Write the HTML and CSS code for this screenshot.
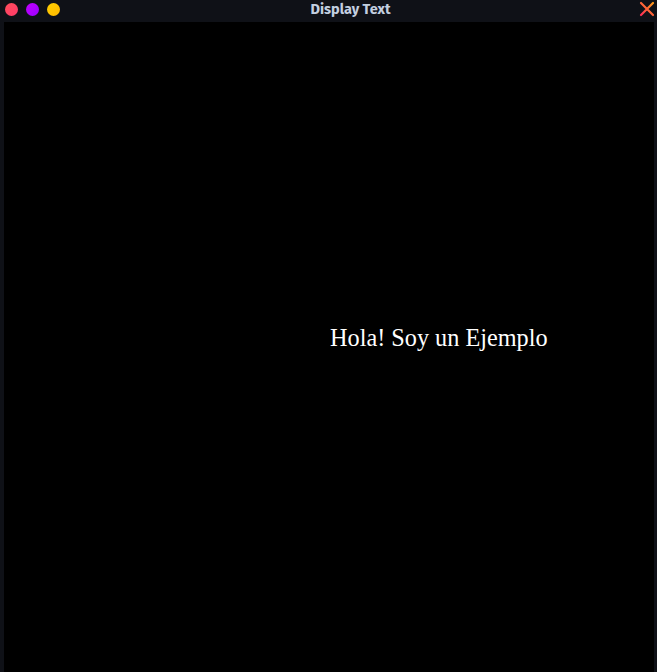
FILE: index.html
```html
<!DOCTYPE html>
<html>
<head>
<meta charset="utf-8">
<link rel="stylesheet" href="styles.css">
<title>Display Text</title>
</head>
<body>
<div class="window">
  <div class="titlebar">
    <div class="dots">
      <span class="dot red"></span>
      <span class="dot purple"></span>
      <span class="dot yellow"></span>
    </div>
    <div class="title">Display Text</div>
    <div class="close">
      <svg width="16" height="16" viewBox="0 0 16 16">
        <defs>
          <linearGradient id="g" x1="0" y1="1" x2="1" y2="0">
            <stop offset="0" stop-color="#ff2d55"/>
            <stop offset="1" stop-color="#ff9a1a"/>
          </linearGradient>
        </defs>
        <path d="M2 2 L14 14 M14 2 L2 14" stroke="url(#g)" stroke-width="2.2" stroke-linecap="round"/>
      </svg>
    </div>
  </div>
  <div class="content">
    <div class="canvas">
      <p class="msg">Hola! Soy un Ejemplo</p>
    </div>
  </div>
</div>
</body>
</html>
```

FILE: styles.css
```css
html, body {
  margin: 0;
  padding: 0;
  background: #0f1117;
}
.window {
  width: 657px;
  height: 672px;
  display: flex;
  flex-direction: column;
  background: #0f1117;
}
.titlebar {
  height: 22px;
  display: flex;
  align-items: center;
  position: relative;
}
.dots {
  display: flex;
  gap: 8px;
  padding-left: 5px;
  padding-top: 0;
  margin-top: -4px;
}
.dot {
  width: 13px;
  height: 13px;
  border-radius: 50%;
  display: block;
}
.red { background: linear-gradient(135deg, #ff4d5a, #ff3a6a); }
.purple { background: linear-gradient(135deg, #c400ff, #9b00ff); }
.yellow { background: linear-gradient(135deg, #ffd000, #ffb800); }
.title {
  flex: 1;
  text-align: center;
  font-family: "Fira Sans", "Open Sans", "Noto Sans", sans-serif;
  font-weight: 700;
  font-size: 14.5px;
  color: #c3cfe0;
  padding-left: 2px;
  margin-top: -4px;
}
.close {
  width: 16px;
  height: 16px;
  margin-right: 2px;
  margin-top: -4px;
}
.close svg { display: block; }
.content {
  flex: 1;
  padding: 0 3px 0 4px;
  display: flex;
}
.canvas {
  flex: 1;
  background: #000;
  padding-left: 326px;
  padding-top: 301px;
}
.msg {
  margin: 0;
  font-family: "Liberation Serif", "Times New Roman", serif;
  font-size: 24.25px;
  line-height: 30px;
  color: #fff;
}
```
